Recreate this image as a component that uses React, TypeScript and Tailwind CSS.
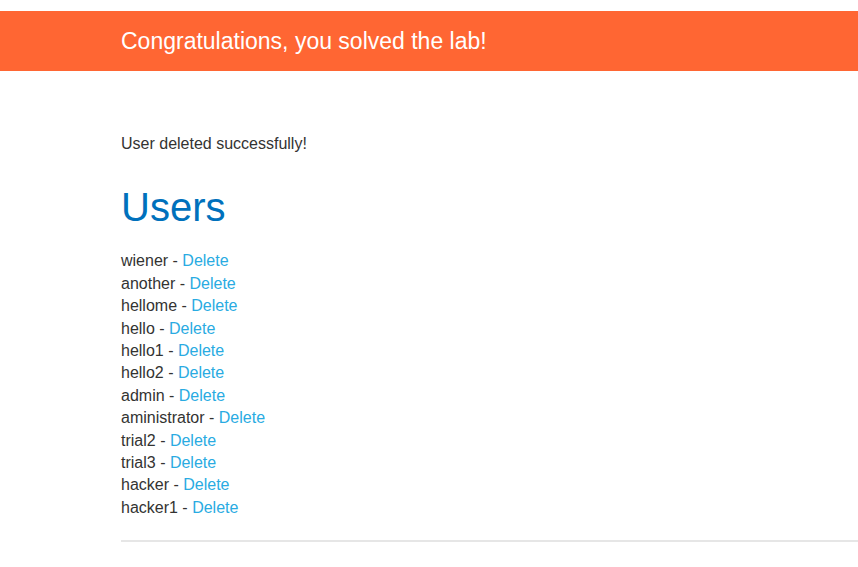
const users = [
  'wiener',
  'another',
  'hellome',
  'hello',
  'hello1',
  'hello2',
  'admin',
  'aministrator',
  'trial2',
  'trial3',
  'hacker',
  'hacker1',
];

export default function App() {
  return (
    <div className="min-h-[567px] bg-white text-[#333332] font-['Liberation_Sans',Arial,sans-serif]">
      <div className="h-[11px]" />
      <div className="flex h-[60px] items-center bg-[#ff6633] pl-[121px] text-[23px] text-white">
        Congratulations, you solved the lab!
      </div>
      <div className="pl-[121px]">
        <p className="mt-[62px] text-[16px] leading-[22.4px]">User deleted successfully!</p>
        <h1 className="mt-[28px] text-[40px] leading-[48px] text-[#0071bc]">Users</h1>
        <div className="mt-[19px] text-[16px] leading-[22.4px]">
          {users.map((u) => (
            <div key={u}>
              <span>{u} - </span>
              <a href="#" className="text-[#29abe2]">
                Delete
              </a>
            </div>
          ))}
        </div>
        <hr className="mt-[21px] border-t-2 border-[#e6e6e6]" />
      </div>
    </div>
  );
}
